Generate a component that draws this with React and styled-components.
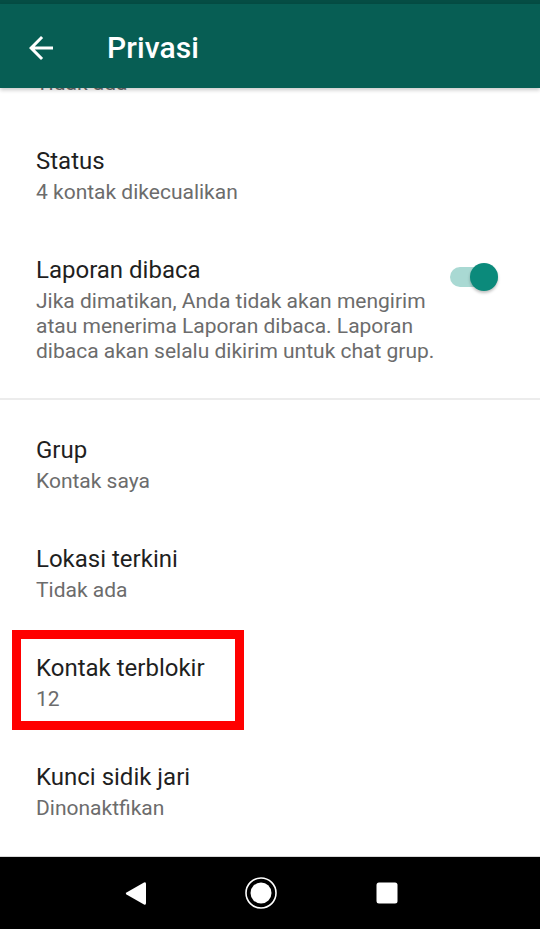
import React, { useLayoutEffect, useRef } from 'react'
import styled, { createGlobalStyle } from 'styled-components'

const GlobalStyle = createGlobalStyle`
    html, body {
        margin: 0;
        padding: 0;
        background: #ffffff;
    }
    body {
        font-family: Roboto, "Noto Sans", "Liberation Sans", sans-serif;
        -webkit-font-smoothing: antialiased;
    }
`

export const Screen = styled.div`
    width: 540px;
    height: 929px;
    display: flex;
    flex-direction: column;
    overflow: hidden;
    background: #ffffff;
`

export const StatusStrip = styled.div`
    height: 4px;
    flex-shrink: 0;
    background: #054d44;
`

export const Toolbar = styled.header`
    position: relative;
    z-index: 2;
    height: 84px;
    box-sizing: border-box;
    padding: 3px 0 0 23px;
    flex-shrink: 0;
    display: flex;
    align-items: center;
    gap: 48px;
    background: #075e54;
    box-shadow: 0 2px 4px rgba(0, 0, 0, 0.22);
`

export const BackButton = styled.button`
    width: 36px;
    height: 36px;
    padding: 0;
    border: none;
    background: transparent;
    display: flex;
    align-items: center;
    justify-content: center;
`

export const ToolbarTitle = styled.h1`
    margin: 0;
    color: #ffffff;
    font-size: 30px;
    font-weight: 500;
    letter-spacing: 0.1px;
`

export const Content = styled.main`
    flex: 1;
    overflow: hidden;
`

export const Section = styled.section`
    padding: 10px 0 ${p => p.$bottom || 10}px;
`

export const Divider = styled.div`
    height: 2px;
    background: #ececec;
`

export const Item = styled.div`
    position: relative;
    display: flex;
    align-items: flex-start;
    padding: 26px 42px 25px 36px;
`

export const ItemText = styled.div`
    flex: 1;
    min-width: 0;
`

export const Title = styled.div`
    font-size: 24px;
    line-height: 28px;
    color: #1f1f1f;
`

export const Summary = styled.div`
    margin-top: 5px;
    font-size: 21px;
    line-height: 25px;
    color: #6c6c6c;
`

export const Switch = styled.div`
    position: relative;
    width: 48px;
    height: 28px;
    margin-top: 7px;
    flex-shrink: 0;
`

export const Track = styled.div`
    position: absolute;
    left: 0;
    right: 0;
    top: 4px;
    height: 20px;
    border-radius: 10px;
    background: ${p => (p.$on ? '#a9d9d3' : '#bdbdbd')};
`

export const Thumb = styled.div`
    position: absolute;
    top: 0;
    ${p => (p.$on ? 'right: 0;' : 'left: 0;')}
    width: 28px;
    height: 28px;
    border-radius: 50%;
    background: ${p => (p.$on ? '#0b8a7b' : '#f1f1f1')};
    box-shadow: 0 2px 3px rgba(0, 0, 0, 0.25);
`

export const Highlight = styled.div`
    position: absolute;
    left: 12px;
    top: 2px;
    width: 232px;
    height: 100px;
    box-sizing: border-box;
    border: 9px solid #ff0000;
    pointer-events: none;
`

export const NavBar = styled.nav`
    height: 72px;
    flex-shrink: 0;
    border-top: 1px solid #d9d9d9;
    background: #000000;
    display: grid;
    grid-template-columns: 125px 21px 99px 32px 99px 22px;
    align-items: center;
`

const BackArrow = () => (
    <svg width="36" height="36" viewBox="0 0 24 24">
        <path fill="#ffffff" d="M20 11H7.83l5.59-5.59L12 4l-8 8 8 8 1.41-1.41L7.83 13H20v-2z"/>
    </svg>
)

const NavBack = () => (
    <svg width="21" height="25" viewBox="0 0 21 25">
        <path fill="#ffffff" d="M19 1.5 Q21 0.5 21 3 V22 Q21 24.5 19 23.5 L1.5 13.6 Q0 12.5 1.5 11.4 Z"/>
    </svg>
)

const NavHome = () => (
    <svg width="32" height="32" viewBox="0 0 32 32">
        <circle cx="16" cy="16" r="15" fill="none" stroke="#ffffff" strokeWidth="1.6"/>
        <circle cx="16" cy="16" r="10.5" fill="#ffffff"/>
    </svg>
)

const NavRecents = () => (
    <svg width="22" height="22" viewBox="0 0 22 22">
        <rect x="0.5" y="0.5" width="21" height="21" rx="2.5" fill="#ffffff"/>
    </svg>
)

const Pref = ({title, summary, children}) => (
    <Item>
        <ItemText>
            <Title>{title}</Title>
            <Summary>{summary}</Summary>
        </ItemText>
        {children}
    </Item>
)

export default function App() {
    const listRef = useRef(null)

    // the list is shown scrolled down, with "Status" just under the toolbar
    useLayoutEffect(() => {
        if (listRef.current) listRef.current.scrollTop = 304
    }, [])

    return (
        <Screen>
            <GlobalStyle/>
            <StatusStrip/>
            <Toolbar>
                <BackButton aria-label="Kembali"><BackArrow/></BackButton>
                <ToolbarTitle>Privasi</ToolbarTitle>
            </Toolbar>
            <Content ref={listRef}>
                <Section $bottom={9}>
                    <Pref title="Terakhir dilihat" summary="Semua orang"/>
                    <Pref title="Foto profil" summary="Semua orang"/>
                    <Pref title="Info" summary="Tidak ada"/>
                    <Pref title="Status" summary="4 kontak dikecualikan"/>
                    <Pref
                        title="Laporan dibaca"
                        summary={<>Jika dimatikan, Anda tidak akan mengirim<br/>atau menerima Laporan dibaca. Laporan<br/>dibaca akan selalu dikirim untuk chat grup.</>}
                    >
                        <Switch>
                            <Track $on/>
                            <Thumb $on/>
                        </Switch>
                    </Pref>
                </Section>
                <Divider/>
                <Section>
                    <Pref title="Grup" summary="Kontak saya"/>
                    <Pref title="Lokasi terkini" summary="Tidak ada"/>
                    <Pref title="Kontak terblokir" summary="12">
                        <Highlight/>
                    </Pref>
                    <Pref title="Kunci sidik jari" summary="Dinonaktfikan"/>
                </Section>
            </Content>
            <NavBar>
                <span/>
                <NavBack/>
                <span/>
                <NavHome/>
                <span/>
                <NavRecents/>
            </NavBar>
        </Screen>
    )
}
